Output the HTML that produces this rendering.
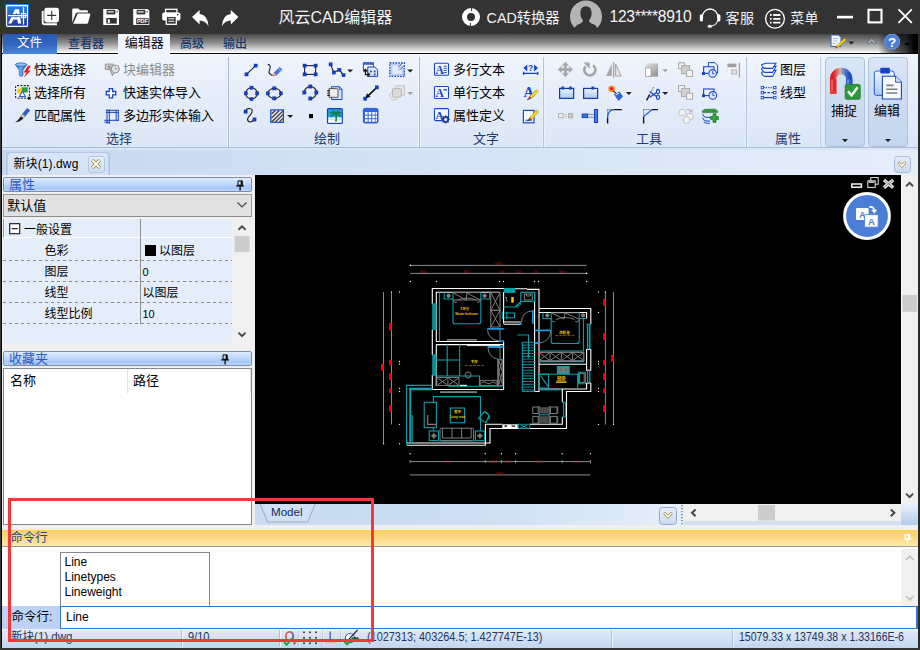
<!DOCTYPE html>
<html><head><meta charset="utf-8">
<style>
*{box-sizing:border-box;margin:0;padding:0}
html,body{width:920px;height:650px;overflow:hidden;background:#333}
body{font-family:"Liberation Sans","Noto Sans CJK SC",sans-serif;font-size:13px;color:#000;position:relative}
.abs{position:absolute}
#title{left:0;top:0;width:920px;height:34px;background:#333;color:#fff}
#title .t{position:absolute;top:6px;font-size:15px;line-height:20px;white-space:nowrap;color:#f4f4f4}
#tabs{left:2px;top:34px;width:916px;height:20px;background:linear-gradient(#484848 0%,#929292 48%,#e6e6e6 90%,#fff 94%);border-bottom:1.5px solid #0a0a0a}
.tab{position:absolute;top:0;height:19px;font-size:13px;line-height:18px;text-align:center;color:#18386c;white-space:nowrap;font-weight:500}
#ribbon{left:2px;top:54px;width:916px;height:94px;background:linear-gradient(#f1f6fd 0%,#e6eefa 35%,#dce7f6 100%);border-bottom:1px solid #a8bcd8}
.rl{position:absolute;font-size:13px;line-height:16px;white-space:nowrap;color:#000}
.gl{position:absolute;top:78px;font-size:13px;line-height:15px;color:#1e3f73;white-space:nowrap;text-align:center}
.sep{position:absolute;top:4px;width:2px;height:88px;background:linear-gradient(90deg,#b7cbe6 50%,#f7faff 50%)}
#docbar{left:2px;top:148px;width:916px;height:27px;background:linear-gradient(90deg,#c6d8ef,#e6eefa)}
#left{left:2px;top:175px;width:253px;height:355px;background:#f0f0f0}
#canvas{left:255px;top:175px;width:646px;height:329px;background:#000;overflow:hidden}
#vsb{left:901px;top:175px;width:17px;height:329px;background:#f0f0f0}
#modelbar{left:255px;top:504px;width:663px;height:21px;background:#c9dcf2}
#cmdhead{left:2px;top:530px;width:916px;height:16.5px;background:linear-gradient(#fbd160,#fbd677 35%,#fde8b0 100%);border-bottom:1.2px solid #9a9a9a;color:#27448e;font-size:12.4px;line-height:16px;padding-left:8.5px}
#cmdarea{left:2px;top:546.5px;width:916px;height:59.5px;background:#fff}
#cmdin{left:2px;top:605.5px;width:916px;height:23px;background:#bcd3f5}
#status{left:2px;top:628.5px;width:916px;height:19px;background:linear-gradient(#f4f8fd 0,#dde8f7 12%,#cfdef2 60%,#c3d5ed 100%)}
.ph{position:absolute;left:1px;width:249px;height:14.5px;border:1px solid #7f8da6;border-radius:2px;background:linear-gradient(#e0ecfe 0%,#c2dafb 40%,#a7c8f9 78%,#bdd7fb 100%);color:#2a5bc4;font-size:13px;line-height:13px;padding-left:5px;white-space:nowrap}
.prow{position:absolute;left:0;width:231px;height:21px;font-size:12px;line-height:20px;white-space:nowrap}
.prow .k{position:absolute;left:41.5px;top:2px}
.prow .v{position:absolute;left:139.5px;top:2px}
.dash{position:absolute;left:0;width:231px;height:1px;background:repeating-linear-gradient(90deg,#8a8a8a 0 3px,transparent 3px 6px)}
.st{position:absolute;top:1.5px;font-size:12px;line-height:15px;color:#1e3464;white-space:nowrap;transform-origin:0 50%}
.sd{position:absolute;top:1px;width:2px;height:17px;background:linear-gradient(90deg,#aebfda 50%,#f2f6fc 50%)}
</style></head><body>
<div id="title" class="abs">
<svg class="abs" style="left:0;top:0" width="920" height="34" viewBox="0 0 920 34">
<defs><linearGradient id="lg1" x1="0" y1="0" x2="0" y2="1"><stop offset="0" stop-color="#1a8cec"/><stop offset="0.5" stop-color="#2460c8"/><stop offset="1" stop-color="#2030a0"/></linearGradient></defs>

<rect x="5.2" y="4" width="23.7" height="23.9" rx="1.2" fill="url(#lg1)"/>
<rect x="6.6" y="5.6" width="20.9" height="20.8" rx="0.8" fill="none" stroke="#fff" stroke-width="1.1"/>
<path d="M8.2 23.6 L15 9.3 H19 L21.1 23.6 H18 L17.4 19.6 H13.4 L11.4 23.6 Z M14.6 17.2 H17.1 L16.6 12.6 Z" fill="#fff" fill-rule="evenodd"/>
<rect x="7.6" y="14.1" width="14" height="0.9" fill="#2468cc"/><rect x="7.6" y="16.2" width="14" height="0.9" fill="#2458bc"/>
<rect x="8" y="15" width="19.4" height="1.2" fill="#fff"/>
<rect x="22.9" y="7.2" width="1.2" height="17.4" fill="#fff"/>
<rect x="21.4" y="13.4" width="4.3" height="4.3" fill="none" stroke="#fff" stroke-width="0.9"/>

<path d="M42.7 11 V22.6 Q42.7 24.3 44.4 24.3 H57" stroke="#fff" stroke-width="1.9" fill="none"/>
<rect x="44.3" y="7.8" width="14.7" height="14.7" rx="2.4" fill="#fff"/>
<path d="M47.2 15.4 H56.2 M51.7 10.8 V20" stroke="#333" stroke-width="1.1"/>

<path d="M72.2 10 Q72.2 8.6 73.6 8.6 H78.3 L80 10.3 H86.6 Q88 10.3 88 11.7 V12.6 H77.4 Q76 12.6 75.5 14 L72.2 22.5 Z" fill="#fff"/>
<path d="M77.8 13.6 H89.6 Q90.6 13.6 90.3 14.6 L88 23 Q87.7 23.8 86.8 23.8 H73.2 Z" fill="#fff"/>

<path d="M103.2 9 H117 L119 10.6 V25 H103.2 Z" fill="#fff"/>
<rect x="106.6" y="9.8" width="8.7" height="4.6" fill="#333"/><rect x="107.6" y="11.3" width="6" height="1.2" fill="#fff"/>
<rect x="116.6" y="10.8" width="1" height="1.8" fill="#333"/>
<rect x="106.3" y="18" width="10.5" height="5.6" fill="#333"/><rect x="107.8" y="19.3" width="2" height="3.6" fill="#fff"/>

<path d="M133.2 9 H147.3 L149.3 10.6 V25 H133.2 Z" fill="#fff"/>
<rect x="136.6" y="9.8" width="8.7" height="4.6" fill="#333"/><rect x="137.6" y="11.3" width="6" height="1.2" fill="#fff"/>
<rect x="146.6" y="10.8" width="1" height="1.8" fill="#333"/>
<rect x="136.2" y="18.2" width="12.4" height="6" fill="#333"/>
<text x="136.9" y="23.4" font-family="Liberation Sans,sans-serif" font-size="5.6" font-weight="bold" fill="#fff" textLength="11" lengthAdjust="spacingAndGlyphs">PDF</text>

<rect x="165.6" y="9.3" width="11.3" height="4" fill="none" stroke="#fff" stroke-width="1.3"/>
<rect x="162.2" y="12.6" width="18.2" height="7.8" rx="1.6" fill="#fff"/>
<rect x="177" y="14" width="1.4" height="1.4" fill="#333"/>
<rect x="166.3" y="16.3" width="10" height="8" fill="#333" stroke="#fff" stroke-width="1.3"/>
<path d="M168.3 18.8 H174.3 M168.3 21.2 H174.3" stroke="#fff" stroke-width="1.1"/>

<path d="M192 17 L199.6 10 V14 Q207.5 14.3 208.6 26.4 Q205.5 20.6 199.6 20.5 V24.4 Z" fill="#fff"/>

<path d="M238.4 17 L230.8 10 V14 Q222.9 14.3 221.8 26.4 Q224.9 20.6 230.8 20.5 V24.4 Z" fill="#fff"/>

<circle cx="471" cy="17" r="6.5" fill="none" stroke="#fff" stroke-width="5"/>
<path d="M471.6 7.5 V11 M470.4 23 V26.5" stroke="#333" stroke-width="1"/>

<circle cx="586" cy="16.6" r="16" fill="#b4b4b4"/>
<path d="M586 6.2 C590.5 6.2 591.8 10 591.6 13.5 C591.4 17 590.3 19 589 20.3 C589 22 590 23 592 23.8 C596 25 598 27 599 34 H573 C574 27 576 25 580 23.8 C582 23 583 22 583 20.3 C581.7 19 580.6 17 580.4 13.5 C580.2 10 581.5 6.2 586 6.2 Z" fill="#333"/>

<path d="M702.3 17 A7.8 8 0 0 1 717.9 17" fill="none" stroke="#fff" stroke-width="1.3"/>
<rect x="699.8" y="14.2" width="3.2" height="7.4" rx="1.6" fill="#fff"/>
<rect x="717.2" y="14.2" width="3.2" height="7.4" rx="1.6" fill="#fff"/>
<path d="M717.6 20.5 Q716.5 25.3 711.5 26" fill="none" stroke="#fff" stroke-width="1.1"/>
<ellipse cx="709.8" cy="26.2" rx="2.3" ry="1.5" fill="#fff"/>

<circle cx="775" cy="18.8" r="9.4" fill="none" stroke="#fff" stroke-width="1.3"/>
<path d="M770 15 H771.6 M773.2 15 H780.4 M770 18.8 H771.6 M773.2 18.8 H780.4 M770 22.6 H771.6 M773.2 22.6 H780.4" stroke="#fff" stroke-width="1.8"/>

<rect x="837" y="15.8" width="16" height="2.6" fill="#fff"/>
<rect x="868.5" y="9.8" width="13" height="12.6" fill="none" stroke="#fff" stroke-width="2.1"/>
<path d="M898.5 9.3 L911.8 22.8 M911.8 9.3 L898.5 22.8" stroke="#fff" stroke-width="1.8"/>
</svg>

<div class="t" style="left:278.4px;top:8px;font-size:16px">风云CAD编辑器</div>
<div class="t" style="left:486.6px;top:8.3px;font-size:14.3px">CAD转换器</div>
<div class="t" style="left:609.6px;top:7px;font-size:15.6px;letter-spacing:-0.3px">123****8910</div>
<div class="t" style="left:725.6px;top:8.3px;font-size:14px;letter-spacing:0.3px">客服</div>
<div class="t" style="left:790.2px;top:8.3px;font-size:14px;letter-spacing:0.3px">菜单</div>
</div>
<div id="tabs" class="abs">
<div class="abs" style="left:876px;top:0;width:40px;height:18.5px;background:linear-gradient(90deg,rgba(0,0,0,0),rgba(0,0,0,.5) 30%,rgba(10,10,10,.8) 70%,#000 92%)"></div>
<div class="tab" style="left:0.5px;width:54px;height:20px;background:linear-gradient(#2a59b4,#3565c0 55%,#4a88dc);color:#fff;font-size:12.5px;font-weight:400">文件</div>
<div class="tab" style="left:53px;width:62px;font-size:12px;line-height:20px">查看器</div>
<div class="tab" style="left:116.3px;width:51.7px;background:#f0f5fc;color:#0a0a14;height:20.5px;font-size:13px;line-height:18px;font-weight:400">编辑器</div>
<div class="tab" style="left:168px;width:44px;font-size:12px;line-height:20px">高级</div>
<div class="tab" style="left:212px;width:42px;font-size:12px;line-height:20px">输出</div>
<svg class="abs" style="left:820px;top:0" width="96" height="19" viewBox="822 34 96 19">

<path d="M831 35 H838.5 L841 37.5 V46.5 H831 Z" fill="#eef3fb" stroke="#3a62b0" stroke-width="1"/>
<path d="M833 38.5 H838 M833 41 H837 M833 43.5 H835.5" stroke="#9db4dc" stroke-width="0.8"/>
<path d="M836.2 46.2 L844.5 38.2 L846 39.7 L837.8 47.6 Z" fill="#f5d800" stroke="#b88a00" stroke-width="0.5"/>
<path d="M836.2 46.2 L837.8 47.6 L834.6 48.6 Z" fill="#c03020"/>
<path d="M848.3 41.4 H854.3 L851.3 44.6 Z" fill="#222"/>

<path d="M867.6 43.2 Q867.4 42 868.5 41 L871.7 38.4 L874.9 41 Q876 42 875.8 43.2 Q874.6 44.2 873.6 43.2 L871.7 41.4 L869.8 43.2 Q868.8 44.2 867.6 43.2 Z" fill="#d8dde4" fill-opacity="0.5" stroke="#56657a" stroke-width="0.9"/>

<circle cx="892" cy="41.7" r="8" fill="#4b7fd6"/>
<circle cx="892" cy="41.7" r="7.6" fill="none" stroke="#6f9ae2" stroke-width="0.8"/>
<text x="892" y="46.6" text-anchor="middle" font-family="Liberation Sans,sans-serif" font-weight="bold" font-size="13.5" fill="#fff">?</text>
<path d="M904 43 H910.2 L907.1 45.8 Z" fill="#000"/>
</svg>

</div>
<div id="ribbon" class="abs">
<svg class="abs" style="left:0;top:0" width="916" height="94" viewBox="2 54 916 94" font-family="'Liberation Sans','Noto Sans CJK SC',sans-serif" font-size="13">
<defs>
<linearGradient id="gb" x1="0" y1="0" x2="0" y2="1"><stop offset="0" stop-color="#eef4fd"/><stop offset="1" stop-color="#a9c8f5"/></linearGradient>
<linearGradient id="gbtn" x1="0" y1="0" x2="0" y2="1"><stop offset="0" stop-color="#dbe7f7"/><stop offset="0.4" stop-color="#cddcf1"/><stop offset="1" stop-color="#c4d6ee"/></linearGradient>
<linearGradient id="gfun" x1="0" y1="0" x2="1" y2="0"><stop offset="0" stop-color="#1d62cc"/><stop offset="0.45" stop-color="#6aacf2"/><stop offset="1" stop-color="#1a4eb4"/></linearGradient>
<linearGradient id="ggray" x1="0" y1="0" x2="1" y2="1"><stop offset="0" stop-color="#e6e6e6"/><stop offset="1" stop-color="#8e8e8e"/></linearGradient>
<linearGradient id="gmag" x1="0" y1="0" x2="1" y2="0"><stop offset="0" stop-color="#e02020"/><stop offset="0.45" stop-color="#d8b0a0"/><stop offset="0.6" stop-color="#7090d0"/><stop offset="1" stop-color="#2050c0"/></linearGradient>
<g id="h"><rect x="-1.6" y="-1.6" width="3.2" height="3.2" fill="#1040d0" stroke="#0a2a90" stroke-width="0.4"/></g>
<g id="dd"><path d="M0 0 H6 L3 3 Z" fill="#222"/></g>
<g id="ddg"><path d="M0 0 H6 L3 3 Z" fill="#a0a0a0"/></g>
</defs>

<g>
<rect x="227.2" y="57" width="0.8" height="90" fill="#f6f9fe"/><rect x="228" y="57" width="1" height="90" fill="#a3b8d6"/><rect x="229" y="57" width="1" height="90" fill="#eef4fc"/>
<rect x="418.2" y="57" width="0.8" height="90" fill="#f6f9fe"/><rect x="419" y="57" width="1" height="90" fill="#a3b8d6"/><rect x="420" y="57" width="1" height="90" fill="#eef4fc"/>
<rect x="542.4" y="57" width="0.8" height="90" fill="#f6f9fe"/><rect x="543.2" y="57" width="1" height="90" fill="#a3b8d6"/><rect x="544.2" y="57" width="1" height="90" fill="#eef4fc"/>
<rect x="745.4" y="57" width="0.8" height="90" fill="#f6f9fe"/><rect x="746.2" y="57" width="1" height="90" fill="#a3b8d6"/><rect x="747.2" y="57" width="1" height="90" fill="#eef4fc"/>
<rect x="819.6" y="57" width="0.8" height="90" fill="#f6f9fe"/><rect x="820.4" y="57" width="1" height="90" fill="#a3b8d6"/><rect x="821.4" y="57" width="1" height="90" fill="#eef4fc"/>
</g>

<g fill="#1e3c70" text-anchor="middle">
<text x="119" y="143">选择</text>
<text x="327" y="143">绘制</text>
<text x="486" y="143">文字</text>
<text x="649" y="143">工具</text>
<text x="788" y="143">属性</text>
</g>

<g fill="#000">
<text x="34" y="74">快速选择</text>
<text x="34" y="97">选择所有</text>
<text x="34" y="120">匹配属性</text>
<text x="123" y="74" fill="#8c8c8c">块编辑器</text>
<text x="123" y="97">快速实体导入</text>
<text x="123" y="120">多边形实体输入</text>
<text x="453" y="74">多行文本</text>
<text x="453" y="97">单行文本</text>
<text x="453" y="120">属性定义</text>
<text x="780" y="74">图层</text>
<text x="780" y="97">线型</text>
</g>

<path d="M15.3 64.5 Q21 61.5 27 64.5 L23 70 V75.5 Q21 77.3 19.3 75.5 V70 Z" fill="url(#gfun)" stroke="#1c56b0" stroke-width="0.6"/>
<ellipse cx="21.1" cy="64.6" rx="5.6" ry="1.7" fill="#8cc0f6" stroke="#1c56b0" stroke-width="0.6"/>
<path d="M28 65.8 L23.6 72.4 H26.4 L23.8 77.8 L30.8 70.4 H27.8 L30.8 65.8 Z" fill="#e81c1c"/>

<rect x="15.6" y="85.6" width="13.8" height="12.6" rx="1.5" fill="#f8fbff" stroke="#222" stroke-width="1.1" stroke-dasharray="2 1.3"/>
<rect x="21.6" y="87.3" width="6.2" height="5.2" fill="#28a038"/>
<circle cx="19.6" cy="91" r="2.7" fill="#f5c820"/>
<path d="M19.4 96.6 L22.4 91.2 L25.4 96.6 Z" fill="#fff" stroke="#2060d0" stroke-width="1.1"/>
<path d="M27.3 96.7 H30.6 V100 L29.6 99 L28.6 100 L27.3 98.7 L28.3 97.7 Z" fill="#111"/>

<path d="M22.6 114 L27.2 108.4 L29.8 110.3 L25.2 116 Z" fill="#2a5fd0" stroke="#17388a" stroke-width="0.5"/>
<path d="M22.6 114 L25.2 116 L23.4 118.3 L20.7 116.4 Z" fill="#c8c8c8" stroke="#555" stroke-width="0.4"/>
<path d="M20.7 116.4 L23.4 118.3 Q20 122 15.2 122.4 Q18.7 119.5 20.7 116.4 Z" fill="#222"/>

<path d="M105.3 64 H113 V69.5 H105.3 Z" fill="#c4c4c4" stroke="#8a8a8a" stroke-width="0.8"/>
<path d="M108.5 66 L112.5 75.6 L114.3 72.5 L117 72 Z" fill="#d8d8d8" stroke="#777" stroke-width="0.8"/>
<circle cx="115.3" cy="69" r="4" fill="#e4e4e4" stroke="#8c8c8c" stroke-width="1"/>
<path d="M115.3 66.8 V69.2 H117.4" stroke="#888" stroke-width="0.8" fill="none"/>

<path d="M109.3 88.6 H112.6 V91.5 H115.7 V94.8 H112.6 V97.8 H109.3 V94.8 H106.2 V91.5 H109.3 Z" fill="#fff" stroke="#1848c8" stroke-width="1.3"/>

<path d="M107 109.5 V124 M109.3 109.5 V124 M104.3 120.3 H119 M106 110.3 H118.6 M106 112.4 H118.6 M118.3 110.3 V121 M116.2 110.3 V121 M104.3 122.2 H109.3" stroke="#1545c0" stroke-width="1" fill="none"/>


<g stroke="#222" stroke-width="1.1" fill="none">
<path d="M246.5 74.4 L255.6 65.6"/>
<path d="M267.8 64.4 Q271 65 270 68.5 Q268 72.5 270 74 Q271.5 75.3 272.6 75.4"/>
<rect x="304.6" y="65.6" width="11" height="8.8"/>
<path d="M330.6 64.4 L333.8 72.5 L339.4 69.8 L343.5 75.2"/>
<circle cx="251.5" cy="93.4" r="5.7"/>
<ellipse cx="274.4" cy="93.4" rx="6.5" ry="5"/>
<path d="M304.4 92.5 A6 6 0 1 1 310.4 98.5"/>
<path d="M245.6 111.5 Q246 108.3 249.5 108.5 Q253 109 252 112.3 Q250.8 115 248.5 117 Q246.5 119.5 248.5 121.5 Q251 123 254.5 119.5"/>
</g>
<use href="#h" x="246.5" y="74.4"/><use href="#h" x="255.6" y="65.6"/>
<use href="#h" x="304.6" y="65.6"/><use href="#h" x="315.6" y="65.6"/><use href="#h" x="304.6" y="74.4"/><use href="#h" x="315.6" y="74.4"/>
<use href="#h" x="330.6" y="64.4"/><use href="#h" x="333.8" y="72.5"/><use href="#h" x="339.4" y="69.8"/><use href="#h" x="343.5" y="75.2"/>
<use href="#h" x="251.5" y="87.7"/><use href="#h" x="251.5" y="99.1"/><use href="#h" x="245.8" y="93.4"/><use href="#h" x="257.2" y="93.4"/>
<use href="#h" x="274.4" y="88.4"/><use href="#h" x="274.4" y="98.4"/><use href="#h" x="267.9" y="93.4"/><use href="#h" x="280.9" y="93.4"/>
<use href="#h" x="310.4" y="86.5"/><use href="#h" x="304.4" y="92.5"/><use href="#h" x="316.4" y="92.5"/><use href="#h" x="310.4" y="98.5"/>
<use href="#h" x="245.6" y="111.6"/><use href="#h" x="254.5" y="119.5"/>
<use href="#dd" x="347.2" y="69.4"/>

<path d="M274.2 72.8 L279.6 67.3 L282 69.6 L276.6 75.1 Z" fill="#3b7be8" stroke="#1a4ab0" stroke-width="0.5"/>
<path d="M274.2 72.8 L276.6 75.1 L273 76 Z" fill="#f0d0b0" stroke="#c03030" stroke-width="0.5"/>
<path d="M278.4 68.5 L280.8 70.8" stroke="#bcd6fa" stroke-width="0.8"/>

<path d="M331.5 86.7 H339.3 L342 89.4 V99.5 H331.5 Z" fill="#d5e5fb" stroke="#1848c8" stroke-width="1"/>
<path d="M339.3 86.7 V89.4 H342" fill="none" stroke="#1848c8" stroke-width="0.8"/>
<path d="M329 88.6 H336.6 Q338 88.6 338 90 V97.3 H329 Z" fill="#ededed" stroke="#444" stroke-width="0.9"/>
<path d="M327.2 90.6 H330 M327.2 93 H330 M327.2 95.4 H330" stroke="#222" stroke-width="1.1"/>

<rect x="270.8" y="109.9" width="12.6" height="12.4" fill="#e6e6e6" stroke="#1545c0" stroke-width="1.2"/>
<path d="M271.5 114 L275.3 110.5 M271.5 118 L279.3 110.5 M271.8 121.7 L283 111 M275.5 121.7 L283 114.6 M279.5 121.7 L283 118.4" stroke="#3c3c3c" stroke-width="1.2"/>
<use href="#dd" x="287.2" y="115"/>

<rect x="309" y="114" width="4" height="4.2" fill="#000"/>

<rect x="327.5" y="108.6" width="14.8" height="14.8" rx="1" fill="#2aa0e8" stroke="#1545c0" stroke-width="1.2"/>
<rect x="328.2" y="117.3" width="13.4" height="2.2" fill="#e8f6ff"/>
<rect x="328.2" y="119.5" width="13.4" height="3.3" fill="#fff"/>
<path d="M335.3 113 Q336 118 335 121.6 H336.8 Q337.2 117 336.3 113 Z" fill="#0e6a30"/>
<path d="M335.8 113.2 Q332 110 329.6 113.3 Q333 112.4 335.8 113.8 Q331.5 113.5 330.6 117 Q333.3 114.3 335.8 114 Q338.5 114.2 340.6 117 Q340.2 113.4 336.2 113.6 Q339 112.3 341.6 113.4 Q339.4 110 335.8 113.2 Z" fill="#0e7a34" stroke="#0e7a34" stroke-width="0.5"/>
<path d="M335.8 113.4 Q335 110.5 332.8 110.2 M335.8 113.4 Q337 110.6 339 110.3" stroke="#0e7a34" stroke-width="1" fill="none"/>

<rect x="363.4" y="62.8" width="10" height="7.6" fill="#f4f8ff" stroke="#1848c8" stroke-width="1"/>
<rect x="363.4" y="62.8" width="10" height="2" fill="#2a66e0"/>
<rect x="370.3" y="63.1" width="1.6" height="1.4" fill="#e82020"/>
<path d="M367.8 67 H374.8 L377.6 69.8 V76.4 H367.8 Z" fill="#dce9fb" stroke="#1848c8" stroke-width="1"/>
<rect x="370" y="70.6" width="1.8" height="1.8" fill="#1848c8"/><rect x="373.8" y="70.6" width="1.8" height="1.8" fill="#1848c8"/><rect x="373.8" y="73.6" width="1.8" height="1.8" fill="#1848c8"/>
<path d="M365.4 69.6 V74.6 H368.6 M363.6 71.6 L365.4 69.2 L367.2 71.6 M367.4 72.8 L369.6 74.6 L367.4 76.4" stroke="#111" stroke-width="1.2" fill="none"/>

<path d="M390 63.6 H399.5 L404 68 V76 H390 Z" fill="#1848c8" opacity="0.18"/>
<rect x="389.8" y="63" width="14.6" height="13.4" fill="none" stroke="#1545c0" stroke-width="1.3" stroke-dasharray="1.6 1.2"/>
<path d="M392 65 H398.5 V70 H402.6 V74.4 H392 Z" fill="#e6eefc" stroke="#9cb8ee" stroke-width="0.6"/>
<path d="M399 66.6 L402.6 63 M401 68.8 L404.4 65.4" stroke="#1545c0" stroke-width="0.9"/>
<use href="#dd" x="407.2" y="69.4"/>

<path d="M376.6 87.6 L367.2 96.6" stroke="#111" stroke-width="1.6"/>
<path d="M365 98.8 L367 93.2 L370.6 96.8 Z" fill="#111"/>
<use href="#h" x="376.8" y="87.4"/><use href="#h" x="365.2" y="98.6"/>

<circle cx="394.2" cy="95.6" r="4.4" fill="#eaeaea" stroke="#c0c0c0" stroke-width="0.9"/>
<rect x="396" y="85.6" width="8.6" height="9.6" fill="#e3e3e3" stroke="#c4c4c4" stroke-width="0.9"/>
<rect x="392.5" y="88.6" width="8.8" height="8.6" rx="1" fill="#dadada" stroke="#b4b4b4" stroke-width="0.9"/>
<use href="#ddg" x="407.2" y="92"/>

<rect x="363.4" y="108.4" width="14.6" height="14.6" rx="1.6" fill="#2a6ae8" stroke="#1545c0" stroke-width="0.8"/>
<g fill="#fff">
<rect x="365" y="112" width="2.6" height="2.6"/><rect x="368.6" y="112" width="2.6" height="2.6"/><rect x="372.2" y="112" width="2.6" height="2.6"/><rect x="375.6" y="112" width="1.4" height="2.6"/>
<rect x="365" y="115.6" width="2.6" height="2.6"/><rect x="368.6" y="115.6" width="2.6" height="2.6"/><rect x="372.2" y="115.6" width="2.6" height="2.6"/><rect x="375.6" y="115.6" width="1.4" height="2.6"/>
<rect x="365" y="119.2" width="2.6" height="2.6"/><rect x="368.6" y="119.2" width="2.6" height="2.6"/><rect x="372.2" y="119.2" width="2.6" height="2.6"/><rect x="375.6" y="119.2" width="1.4" height="2.6"/>
</g>


<g>
<rect x="434.5" y="63.3" width="14" height="12" rx="1" fill="#f2f7ff" stroke="#1848c8" stroke-width="1.1"/>
<text x="435.6" y="73.6" font-family="'Liberation Serif',serif" font-weight="bold" font-size="11.5" fill="#1545c0">A</text>
<path d="M443.6 66.2 H446.8 M443.6 68.3 H446.8 M443.6 70.4 H446.8 M443.6 72.5 H446.8" stroke="#1848c8" stroke-width="0.9"/>
<rect x="434.5" y="86.5" width="14" height="12" rx="1" fill="#f2f7ff" stroke="#1848c8" stroke-width="1.1"/>
<text x="435.6" y="96.8" font-family="'Liberation Serif',serif" font-weight="bold" font-size="11.5" fill="#1545c0">A</text>
<path d="M443.4 89.8 H447" stroke="#1848c8" stroke-width="1.3"/>
<rect x="434.5" y="108.6" width="14" height="12" rx="1" fill="#f2f7ff" stroke="#1848c8" stroke-width="1.1"/>
<text x="435.6" y="118.6" font-family="'Liberation Serif',serif" font-weight="bold" font-size="11" fill="#1545c0">A</text>
<circle cx="445.6" cy="119.4" r="2.6" fill="#fff" stroke="#1a3a90" stroke-width="1.5"/>
<path d="M445.6 115.2 V123.6 M441.4 119.4 H449.8 M442.6 116.4 L448.6 122.4 M448.6 116.4 L442.6 122.4" stroke="#1a3a90" stroke-width="1.1"/>
<circle cx="445.6" cy="119.4" r="1.5" fill="#fff"/>
</g>

<path d="M523.4 68 L527.3 64.6 V71.4 Z M538 68 L534.1 64.6 V71.4 Z" fill="#1545c0"/>
<text x="530.7" y="71.4" text-anchor="middle" font-weight="bold" font-size="8.5" fill="#1545c0">?</text>
<path d="M523.6 73.4 H537.8 M523.6 71.8 V75 M537.8 71.8 V75" stroke="#1545c0" stroke-width="1.3"/>

<text x="523.4" y="96.5" font-family="'Liberation Serif',serif" font-weight="bold" font-size="14.5" fill="#1545c0">A</text>
<path d="M529.6 96.3 L536.4 89.6 L538.4 91.6 L531.6 98.3 Z" fill="#f8d820" stroke="#a07800" stroke-width="0.5"/>
<path d="M529.6 96.3 L531.6 98.3 L529.8 99.2 L528.4 97.9 Z" fill="#c03020"/>
<path d="M528.4 97.9 L529.8 99.2 L526.6 100.2 Z" fill="#223a80"/>

<rect x="523.4" y="110.4" width="10.6" height="12.4" fill="#f4f8ff" stroke="#1848c8" stroke-width="1.2"/>
<path d="M525.4 120.2 H532" stroke="#1848c8" stroke-width="1"/>
<path d="M529.8 117.6 L536.6 110 L538.6 111.8 L531.8 119.5 Z" fill="#f8d820" stroke="#a07800" stroke-width="0.5"/>
<path d="M529.8 117.6 L531.8 119.5 L530 120.4 L528.6 119 Z" fill="#c03020"/>
<path d="M528.6 119 L530 120.4 L526.8 121.4 Z" fill="#223a80"/>


<g fill="#a8a8a8" stroke="#989898" stroke-width="0.4">
<path d="M565.4 62 L568.4 65.4 H566.4 V68.4 H569.4 V66.4 L572.8 69.4 L569.4 72.4 V70.4 H566.4 V73.4 H568.4 L565.4 76.8 L562.4 73.4 H564.4 V70.4 H561.4 V72.4 L558 69.4 L561.4 66.4 V68.4 H564.4 V65.4 H562.4 Z"/>
</g>

<path d="M585.4 66.4 A5.6 5.6 0 1 0 593 65.2" fill="none" stroke="#a6a6a6" stroke-width="2.6"/>
<path d="M583.4 62.6 H589.6 V68.8 Z" fill="#a6a6a6"/>

<path d="M611.8 64 V76 H606.2 Z" fill="#a4a4a4"/>
<path d="M615.6 64 V76 H621.2 Z" fill="#e6e6e6" stroke="#a4a4a4" stroke-width="1"/>
<path d="M613.7 62.2 V77.8" stroke="#8e8e8e" stroke-width="1"/>

<rect x="559.6" y="88.4" width="14" height="10" fill="url(#gb)" stroke="#1038b0" stroke-width="1.2"/>
<rect x="561.4" y="86.6" width="2.8" height="3" fill="#1545c0"/><rect x="569" y="86.6" width="2.8" height="3" fill="#1545c0"/>
<rect x="583.6" y="88.4" width="14" height="10" fill="url(#gb)" stroke="#1038b0" stroke-width="1.2"/>
<rect x="591.4" y="86.6" width="2.8" height="3" fill="#1545c0"/>

<circle cx="611.6" cy="88.8" r="3.4" fill="#f8a020"/>
<circle cx="611.6" cy="88.8" r="1.8" fill="#e82020"/>
<path d="M613 90.6 Q614.6 92 616 93.4" stroke="#222" stroke-width="1.2" fill="none"/>
<path d="M614.4 94.6 L619.4 92 L622.6 96.6 L618.6 100.4 Z" fill="#2a6ae0" stroke="#1038a0" stroke-width="0.6"/>
<path d="M615.6 94.8 L619 93.2" stroke="#fff" stroke-width="0.9"/>
<use href="#dd" x="625.8" y="92"/>

<rect x="558.6" y="113.6" width="4.4" height="4.2" fill="#f0f0f0" stroke="#aaa" stroke-width="0.9"/>
<rect x="568.4" y="113.6" width="4.4" height="4.2" fill="#c8c8c8" stroke="#aaa" stroke-width="0.9"/>
<path d="M564.4 114.6 H567 M564.4 116.8 H567" stroke="#aaa" stroke-width="0.9" stroke-dasharray="1 0.8"/>

<rect x="582.2" y="114" width="5.4" height="3.6" fill="#3a7af0" stroke="#1038b0" stroke-width="0.9"/>
<path d="M588.6 114.4 H593.4 M588.6 117.2 H593.4" stroke="#222" stroke-width="1" stroke-dasharray="1 1"/>
<rect x="594.4" y="109.4" width="3.2" height="13.2" fill="#3a7af0" stroke="#1038b0" stroke-width="0.9"/>

<path d="M607.6 123.4 V118 M613.6 109.6 H621.8" stroke="#111" stroke-width="1.4"/>
<path d="M607.6 118 Q607.8 110.4 613.6 109.7" stroke="#2a66e0" stroke-width="1.3" fill="none"/>
<path d="M607.6 109.6 V117 M607.6 109.6 H613" stroke="#333" stroke-width="0.9" stroke-dasharray="1 1" fill="none"/>

<path d="M643.6 123.6 V116.6 M652 109.6 H658" stroke="#111" stroke-width="1.4"/>
<path d="M643.6 116.6 L652 109.7" stroke="#2a66e0" stroke-width="1.3"/>
<path d="M643.6 109.6 V116 M643.6 109.6 H651" stroke="#333" stroke-width="0.9" stroke-dasharray="1 1" fill="none"/>

<rect x="645.4" y="63.4" width="12.6" height="13.2" fill="url(#ggray)"/>
<rect x="645.6" y="68" width="5.4" height="8.4" fill="#fff" stroke="#666" stroke-width="0.9" stroke-dasharray="1 1"/>
<use href="#ddg" x="662.2" y="69.2"/>

<path d="M646.6 100 L654 86.4" stroke="#555" stroke-width="1" stroke-dasharray="1.6 1"/>
<path d="M646.6 100.4 L649.6 94.6" stroke="#222" stroke-width="1.4"/>
<path d="M649.6 91.4 L656.4 96.4 M649.6 97.4 L656.4 92.4" stroke="#1545c0" stroke-width="1.2"/>
<ellipse cx="658" cy="91.6" rx="1.5" ry="2.2" fill="none" stroke="#1545c0" stroke-width="1.1"/>
<ellipse cx="658" cy="97.2" rx="1.5" ry="2.2" fill="none" stroke="#1545c0" stroke-width="1.1"/>
<use href="#dd" x="662.2" y="92"/>

<g stroke="#a8a8a8" stroke-width="1">
<rect x="678.6" y="62.8" width="6" height="6" fill="#f0f0f0"/>
<rect x="681.6" y="65.8" width="8" height="8" fill="#d0d0d0"/>
<rect x="686.6" y="70.4" width="6" height="6" fill="#f4f4f4"/>
<rect x="678.6" y="85.6" width="6" height="6" fill="#f4f4f4"/>
<rect x="681.6" y="88.6" width="8" height="8" fill="#d4d4d4"/>
<rect x="686.6" y="93.2" width="6" height="6" fill="#f4f4f4"/>
</g>

<g stroke="#bcbcbc" stroke-width="0.9" fill="#f2f2f2">
<circle cx="682.2" cy="112.4" r="3.4"/>
<circle cx="690" cy="116.6" r="3.4"/>
<circle cx="686.6" cy="120" r="3.4"/>
</g>
<path d="M686.6 109.6 Q690 109 691.6 111.6 M689.6 111.8 H692 V109.2" stroke="#b0b0b0" stroke-width="1" fill="none"/>

<path d="M708.4 62.6 H715 L717.6 65.4 V73 H708.4 Z" fill="#e8f0fd" stroke="#1848c8" stroke-width="1"/>
<rect x="703.6" y="66.8" width="10.4" height="6.6" fill="#e8f0fd" stroke="#1848c8" stroke-width="1.1"/>
<rect x="702" y="72" width="3" height="3" fill="#1545c0"/>
<circle cx="712.6" cy="73.4" r="3.8" fill="#dce8fc" stroke="#1848c8" stroke-width="1.1"/>
<path d="M712.6 71.2 V73.6 H714.4" stroke="#1848c8" stroke-width="0.9" fill="none"/>
<rect x="703.6" y="89" width="10.4" height="6.6" fill="#e8f0fd" stroke="#1848c8" stroke-width="1.1"/>
<rect x="702" y="94.2" width="3" height="3" fill="#1545c0"/>
<circle cx="712.8" cy="95.4" r="3.8" fill="#dce8fc" stroke="#1848c8" stroke-width="1.1"/>
<path d="M712.8 93.2 V95.6 H714.6" stroke="#1848c8" stroke-width="0.9" fill="none"/>

<path d="M702.4 111 L705 109.2 H715.4 L717.6 111 V112.6 H702.4 Z" fill="#2e9a3a" stroke="#1a6a24" stroke-width="0.6"/>
<path d="M702.6 114 Q703.4 117 706 117.4 H711 M702.6 117.6 Q703.4 120.6 706 121 H710 M703.6 121.6 Q704.8 123.2 707 123.2 H710" stroke="#1848c8" stroke-width="1" fill="none"/>
<path d="M713 113.8 H716 V116.6 H718.4 V119.6 H716 V122.4 H713 V119.6 H710.6 V116.6 H713 Z" fill="#28a838" stroke="#14701e" stroke-width="0.7"/>

<rect x="727.4" y="63.6" width="9" height="3.6" fill="#a0a0a0"/>
<rect x="731.4" y="70" width="5" height="4" fill="#e4e4e4" stroke="#a8a8a8" stroke-width="0.8"/>
<path d="M739.4 62.8 V77.6" stroke="#a0a0a0" stroke-width="1.2"/>


<g fill="#f2f7ff" stroke="#1848c8" stroke-width="1.1">
<path d="M761.6 72.4 L765.6 70.4 H776 L772.6 76.4 H765 Q762 76 761.6 72.4 Z"/>
<path d="M761.6 68.4 L765.6 66.4 H776 L772.6 72.4 H765 Q762 72 761.6 68.4 Z"/>
<path d="M761.6 64.8 L765.6 63.2 H776 L772.6 68.4 H765 Q762 68 761.6 64.8 Z"/>
</g>

<g stroke="#1848c8" fill="#fff">
<path d="M763.4 87.6 H774" stroke-width="1.1" stroke-dasharray="1.2 1.2"/>
<path d="M763.4 92.6 H774" stroke-width="1.1" stroke-dasharray="2.6 1.4"/>
<path d="M763.4 97.6 H774" stroke-width="1.2"/>
<rect x="761.2" y="86.4" width="2.4" height="2.4" stroke-width="0.9"/><rect x="773.6" y="86.4" width="2.4" height="2.4" stroke-width="0.9"/>
<rect x="761.2" y="91.4" width="2.4" height="2.4" stroke-width="0.9"/><rect x="773.6" y="91.4" width="2.4" height="2.4" stroke-width="0.9"/>
<rect x="761.2" y="96.4" width="2.4" height="2.4" stroke-width="0.9"/><rect x="773.6" y="96.4" width="2.4" height="2.4" stroke-width="0.9"/>
</g>

<rect x="825.5" y="57.5" width="39" height="89" rx="3.5" fill="url(#gbtn)" stroke="#aec3e2" stroke-width="1"/>
<rect x="868.5" y="57.5" width="39" height="89" rx="3.5" fill="url(#gbtn)" stroke="#aec3e2" stroke-width="1"/>
<g fill="#000"><text x="844" y="115.3" text-anchor="middle">捕捉</text><text x="887" y="115.3" text-anchor="middle">编辑</text></g>
<path d="M842 139 H848 L845 142.2 Z M885 139 H891 L888 142.2 Z" fill="#222"/>

<path d="M833.2 93.6 V79 A8 8 0 0 1 849.2 79 V93.6" fill="none" stroke="url(#gmag)" stroke-width="6.4"/>
<path d="M833.2 93.6 V79.4" stroke="#e02828" stroke-width="6.4" fill="none"/>
<path d="M849.2 93.6 V79.4" stroke="#2858c8" stroke-width="6.4" fill="none"/>
<path d="M832 93 V79.4" stroke="#f07070" stroke-width="1.4"/>
<path d="M848 88 V79.4" stroke="#80a8f0" stroke-width="1.4"/>
<rect x="830" y="91.2" width="6.4" height="2.6" fill="#e84040"/>
<rect x="845.2" y="84.4" width="15" height="14.8" rx="1.5" fill="#2c9a3a" stroke="#1c7428" stroke-width="0.8"/>
<path d="M848 91.4 L851.6 95.4 L857.6 87.2" stroke="#fff" stroke-width="2.4" fill="none"/>

<rect x="874.3" y="71" width="20" height="24.4" rx="2.4" fill="url(#gb)" stroke="#2a5cc8" stroke-width="1"/>
<rect x="880.3" y="67.8" width="9.6" height="5.6" rx="0.8" fill="#1545c0"/>
<path d="M882.4 76.2 H895.6 L901.4 82.2 V99 H882.4 Z" fill="#f6f9ff" stroke="#1c48b4" stroke-width="1.1"/>
<path d="M895.6 76.2 V82.2 H901.4" fill="#dbe6f8" stroke="#1c48b4" stroke-width="0.9"/>
<path d="M886.2 85.4 H893.4 M886.2 89.2 H897.4 M886.2 93 H897.4" stroke="#7e7e7e" stroke-width="1.6"/>

</svg>

</div>
<div id="docbar" class="abs">
<div class="abs" style="left:0;top:0;width:916px;height:2px;background:#dbe6f5"></div>
<div class="abs" style="left:4px;top:4px;width:104px;height:23px;border:1px solid #b3c6e1;border-bottom:none;border-radius:4px 4px 0 0;background:#bccfe9"></div>
<div class="abs" style="left:5.5px;top:5px;width:100px;height:22px;border-radius:3px 3px 0 0;background:linear-gradient(#dae6f7,#d3e1f5);font-size:12px;line-height:22px;padding-left:6px;white-space:nowrap;letter-spacing:0.1px">新块(1).dwg</div>
<div class="abs" style="left:85.5px;top:7.5px;width:17px;height:17px;border:1px solid #b4c6e0;border-radius:3px;background:linear-gradient(#e6eefa,#cfdef3)"></div>
<svg class="abs" style="left:89px;top:11px" width="10" height="10" viewBox="0 0 10 10"><path d="M1.2 1.2 L8.8 8.8 M8.8 1.2 L1.2 8.8" stroke="#9a8440" stroke-width="3.5"/><path d="M1.4 1.4 L8.6 8.6 M8.6 1.4 L1.4 8.6" stroke="#fff" stroke-width="1.9"/></svg>
<div class="abs" style="left:0;top:26.5px;width:253px;height:1px;background:#f4f4f4"></div>
<div class="abs" style="left:891.5px;top:7.5px;width:17.5px;height:17.5px;border:1px solid #a8bddc;border-radius:3.5px;background:linear-gradient(#e4edf9,#c9daf1)"></div>
<svg class="abs" style="left:895.3px;top:13px" width="10" height="8" viewBox="0 0 11 9"><path d="M1 2.4 L2.6 0.9 L5.5 3.6 L8.4 0.9 L10 2.4 L5.5 7.4 Z" fill="#fff" stroke="#a08838" stroke-width="1"/></svg>

</div>
<div id="left" class="abs">
<div class="ph" style="top:2.3px">属性</div>
<svg class="abs" style="left:233px;top:4.5px" width="10" height="11" viewBox="0 0 10 11"><path d="M3 0.9 H7.2 V5.2 H3 Z" fill="#cfe0fb" stroke="#000" stroke-width="1"/><rect x="5.7" y="0.9" width="1.6" height="4.4" fill="#000"/><path d="M1.2 5.8 H8.9 M5.1 6 V10.4" fill="none" stroke="#000" stroke-width="1.25"/></svg>

<div class="abs" style="left:1px;top:18.5px;width:249px;height:23px;background:#e1e1e1;border:1px solid #9a9a9a;border-bottom:1.5px solid #8c8c8c;font-size:13px;line-height:22px;padding-left:3.3px">默认值</div>
<svg class="abs" style="left:234px;top:26px" width="12" height="8" viewBox="0 0 12 8"><path d="M1.5 1.5 L6 6 L10.5 1.5" fill="none" stroke="#444" stroke-width="1.2"/></svg>

<div class="abs" style="left:1px;top:44px;width:229.3px;height:124px;background:#e4eefb;overflow:hidden">
<div class="abs" style="left:0;top:0;width:231px;height:19px;border-bottom:1px solid #fff;border-left:1px solid #9a9a9a"></div>
<svg class="abs" style="left:5.5px;top:3.5px" width="12" height="12" viewBox="0 0 12 12"><rect x="0.7" y="0.7" width="10" height="10" fill="#fff" stroke="#111" stroke-width="1.1"/><path d="M2.6 5.7 H8.8" stroke="#111" stroke-width="1.1"/></svg>
<div class="abs" style="left:21px;top:1px;font-size:12px;line-height:20px;white-space:nowrap">一般设置</div>
<div class="prow" style="top:20px"><span class="k">色彩</span><span class="v" style="left:156px">以图层</span><i class="abs" style="left:142px;top:5.5px;width:11px;height:11px;background:#000"></i></div>
<div class="dash" style="top:41px"></div>
<div class="prow" style="top:41px"><span class="k">图层</span><span class="v" style="font-size:11px">0</span></div>
<div class="dash" style="top:62px"></div>
<div class="prow" style="top:62px"><span class="k">线型</span><span class="v">以图层</span></div>
<div class="dash" style="top:83px"></div>
<div class="prow" style="top:83px"><span class="k">线型比例</span><span class="v" style="font-size:11px">10</span></div>
<div class="dash" style="top:104px"></div>
<div class="abs" style="left:136.5px;top:0;width:1px;height:105px;background:#8f8f8f"></div>
</div>

<div class="abs" style="left:231.5px;top:44px;width:16.5px;height:124px;background:#f0f0f0">
<svg class="abs" style="left:0;top:0" width="17" height="124" viewBox="0 0 17 124"><path d="M4.5 10.8 L8 7.3 L11.5 10.8" fill="none" stroke="#4a4a4a" stroke-width="2"/><rect x="0.6" y="17" width="15" height="16" fill="#cdcdcd"/><path d="M4.5 113.6 L8 117.1 L11.5 113.6" fill="none" stroke="#4a4a4a" stroke-width="2"/></svg>
</div>

<div class="ph" style="top:176.3px">收藏夹</div>
<svg class="abs" style="left:218px;top:178.5px" width="10" height="11" viewBox="0 0 10 11"><path d="M3 0.9 H7.2 V5.2 H3 Z" fill="#cfe0fb" stroke="#000" stroke-width="1"/><rect x="5.7" y="0.9" width="1.6" height="4.4" fill="#000"/><path d="M1.2 5.8 H8.9 M5.1 6 V10.4" fill="none" stroke="#000" stroke-width="1.25"/></svg>
<div class="abs" style="left:1px;top:192.5px;width:249px;height:157px;background:#fff;border:1px solid #828790">
<div class="abs" style="left:6px;top:3px;font-size:13px;line-height:18px">名称</div>
<div class="abs" style="left:129px;top:3px;font-size:13px;line-height:18px">路径</div>
<div class="abs" style="left:123px;top:0;width:1px;height:24px;background:#e0e0e0"></div>
<div class="abs" style="left:245.5px;top:0;width:1px;height:24px;background:#e0e0e0"></div>
</div>

</div>
<div id="canvas" class="abs">
<svg class="abs" style="left:0;top:0" width="646" height="329" viewBox="255 175 646 329" fill="none" font-family="'Liberation Sans','Noto Sans CJK SC',sans-serif">

<g stroke="#8c8c8c" stroke-width="1">
<path d="M410.3 265.4 H586.6 M410.3 273.4 H586.6"/>
<path d="M383.5 292 V443.8 M391.5 292 V424.5"/>
<path d="M605.4 292 V424.5 M613.5 292 V424.5"/>
<path d="M410.1 461.6 H590.5 M410.1 474.9 H590.5"/>
<path d="M410.1 460 V463.2 M485.3 460 V463.2 M501.4 460 V463.2 M515.6 460 V463.2 M562.2 460 V463.2 M590.5 460 V463.2"/>
</g>

<g fill="#e8e8e8">
<circle cx="410.3" cy="265.4" r="0.8"/><circle cx="586.6" cy="273.4" r="0.8"/>
<circle cx="410.3" cy="281.5" r="0.7"/><circle cx="436.5" cy="281.5" r="0.7"/><circle cx="499.5" cy="281.5" r="0.7"/><circle cx="503.5" cy="281.5" r="0.7"/><circle cx="534.5" cy="281.5" r="0.7"/><circle cx="538.5" cy="281.5" r="0.7"/><circle cx="586.6" cy="281.5" r="0.7"/>
<circle cx="391.5" cy="292" r="0.7"/><circle cx="399.5" cy="292" r="0.7"/><circle cx="399.5" cy="361.5" r="0.7"/><circle cx="399.5" cy="364" r="0.7"/><circle cx="399.5" cy="388.5" r="0.7"/><circle cx="399.5" cy="391.5" r="0.7"/><circle cx="399.5" cy="424.4" r="0.7"/><circle cx="383.6" cy="443.8" r="0.7"/><circle cx="399.5" cy="443.8" r="0.7"/>
<circle cx="598.5" cy="292" r="0.7"/><circle cx="605.4" cy="292" r="0.7"/><circle cx="598.5" cy="312.5" r="0.7"/><circle cx="598.5" cy="361.5" r="0.7"/><circle cx="598.5" cy="364" r="0.7"/><circle cx="598.5" cy="388.5" r="0.7"/><circle cx="598.5" cy="391.5" r="0.7"/><circle cx="598.5" cy="424.4" r="0.7"/><circle cx="613.5" cy="424.4" r="0.7"/>
<circle cx="410.1" cy="453.7" r="0.7"/><circle cx="485.3" cy="453.7" r="0.7"/><circle cx="501.4" cy="453.7" r="0.7"/><circle cx="515.6" cy="453.7" r="0.7"/><circle cx="562.2" cy="453.7" r="0.7"/><circle cx="590.5" cy="453.7" r="0.7"/>
</g>

<g fill="#ff0000">
<rect x="389.2" y="323" width="2.6" height="7.3"/><rect x="389.2" y="360" width="2.6" height="5.4"/><rect x="389.2" y="373" width="2.6" height="7"/><rect x="389.2" y="388.5" width="2.6" height="4.5"/><rect x="389.2" y="405" width="2.6" height="6.5"/><rect x="381" y="363.8" width="2.8" height="7"/>
<rect x="603.2" y="299" width="2.6" height="6.7"/><rect x="603.2" y="333" width="2.6" height="7"/><rect x="603.2" y="360" width="2.6" height="5.4"/><rect x="603.2" y="373" width="2.6" height="7"/><rect x="603.2" y="388.5" width="2.6" height="4.5"/><rect x="603.2" y="405" width="2.6" height="7"/><rect x="611.2" y="355" width="2.6" height="6.5"/>
</g>
<g fill="#b01010" font-size="3" text-anchor="middle">
<text x="423" y="273">3300</text><text x="466.5" y="273">4800</text><text x="501.5" y="273">240</text><text x="518" y="273">2100</text><text x="535.5" y="273">240</text><text x="562" y="273">3600</text><text x="498" y="265">13800</text>
<text x="447" y="462.5">5700</text><text x="493" y="462.5">1200</text><text x="507.5" y="462.5">900</text><text x="538" y="462.5">3600</text><text x="576" y="462.5">2100</text><text x="500" y="475">13800</text>
</g>


<g stroke="#fff" stroke-width="1.1">

<path d="M432.3 304 V288.5 H504.2"/>
<path d="M436.3 341.5 V292.3 H499.5"/>
<path d="M432.3 329.5 V355 M432.3 375 V389.5 H503.5"/>
<path d="M436.3 341.5 H503.8 M436.3 344.6 H503.5 M436.3 344.6 V386"/>
<path d="M467 345.6 H500" stroke-width="0.9"/>

<path d="M514.6 288.7 H527 M527 289.4 H539 V308.5"/>
<path d="M503.6 292 V323.5 M503.6 341.5 V389.5"/>
<path d="M534.6 292.3 V391.5 M503.6 322 H520.8 M503.6 324.2 H520.8"/>

<path d="M539 308.5 H590.8 V324.2 M539 312.5 H586.6 V318.5"/>
<path d="M539 308.5 V391.5"/>
<path d="M586.6 349.5 H590.8 V370.2 H586.6 Z"/>
<path d="M539 364.3 H586.6"/>

<path d="M590.8 383 V391.5 H566.5 V428.5 H490 M586.6 383 V389 H562.3 V402.3 M562.3 417 V424.3 H529.7 M518.5 424.3 H517.7 M502.3 424.3 H485.4 V445.2 H406.7 M502.3 428.5 H490 V443 H406.7" />
<path d="M586.6 383 H590.8"/>
<path d="M535 391.5 H539.5 M562.3 389 H539"/>
<path d="M460 385.6 H467" stroke-width="1.6"/>
</g>
<rect x="502.3" y="424.3" width="15.4" height="4.2" fill="#fff"/>
<rect x="504.5" y="425.3" width="2.6" height="1.6" fill="#222"/><rect x="511.5" y="425.3" width="3.6" height="1.6" fill="#444"/>

<g stroke="#0aa0a8" stroke-width="1.1">

<rect x="432.6" y="304" width="3.6" height="25.5" fill="#0a8e96" stroke-width="0.6"/>
<path d="M432.3 304 H436.3 M432.3 329.5 H436.3"/>
<path d="M439.5 292.3 V341.5"/>
<path d="M444.2 292.3 V299 H453 M480.8 299 H489.7 V292.3"/>
<path d="M453 292.3 V321.5 Q453 323.8 455.3 323.8 H478.5 Q480.8 323.8 480.8 321.5 V292.3"/>

<rect x="504.4" y="288.5" width="10.2" height="3.8" fill="#0aa0a8"/>
<rect x="520.8" y="292.3" width="13.8" height="9.2"/>
<path d="M503.6 307 H515.4 L521 301.5 M516.5 306 L518 307.5 M518 304.5 L519.5 306 M519.5 303 L521 304.5"/>
<path d="M502.3 311.5 V319.2 M504.5 313 H514.6 V317.8 H504.5 M506.8 311.5 V319.2"/>

<path d="M543 312.5 V318.5 H551.2 M579.2 318.5 H586.6"/>
<path d="M551.2 312.5 V341.2 Q551.2 343.5 553.5 343.5 H577 Q579.2 343.5 579.2 341.2 V312.5"/>
<path d="M583.5 318.5 V351"/>
<path d="M587.6 324.2 V349.5 M589.8 324.2 V349.5" stroke-width="1.5"/>
<path d="M586.6 324.2 H590.8"/>
<path d="M539 351 H583.5 M539 361.6 H583.8"/>

<path d="M517.4 335 H528.5 V357 M522.3 342.3 V391.5 M522.3 342.3 H535"/>
<path d="M522.3 345.1 H535 M522.3 347.9 H535 M522.3 350.7 H535 M522.3 353.5 H535 M522.3 356.3 H535 M522.3 359.1 H535 M522.3 361.9 H535 M522.3 364.7 H535 M522.3 367.5 H535 M522.3 370.3 H535 M522.3 373.1 H535 M522.3 375.9 H535 M522.3 378.7 H535 M522.3 381.5 H535 M522.3 384.3 H535 M522.3 387.1 H535 M522.3 389.9 H535 M522.3 391.5 H535" stroke-width="0.9"/>
<path d="M527.3 355.5 L528.5 357.5 L529.7 355.5"/>

<rect x="557.4" y="366.5" width="11.8" height="7" fill="#2a8a90"/>
<path d="M538.5 374.2 H577.7 V388.5"/>
<rect x="539.2" y="374.2" width="9.3" height="13.8"/>
<path d="M540.5 375.5 L548.5 387 M543.5 380 L545 382.5"/>
<path d="M539 389.6 H562" stroke-width="1.6"/>
<path d="M578.5 372.3 H585.4 V383.8 H578.5 Z"/>
<path d="M587.6 370.5 V382.5 M589.8 370.5 V382.5" stroke-width="1.3"/>
<path d="M563.4 402.3 V417 M565.4 402.3 V417 M562.3 402.3 H566.5 M562.3 417 H566.5"/>
<path d="M518.5 424.3 H529.7 V428.5 H518.5 Z M520.5 425 L527.5 427.8 M527.5 425 L520.5 427.8" stroke-width="0.9"/>

<path d="M539.2 406 V424.3 M549.2 406 V424.3 M539.2 414.8 H549.2"/>

<rect x="432.6" y="355" width="3.6" height="20" fill="#0a8e96" stroke-width="0.6"/>
<path d="M432.3 355 H436.3 M432.3 375 H436.3"/>
<path d="M447.2 344.6 V376 M459.7 344.6 V376 M436.3 360 H459.7 M436.3 376 H479.5 V386 M448.5 386.2 H503.5"/>
<path d="M497.7 359.2 H503.5 M497.7 359.2 V385.8"/>

<path d="M406.6 445 V385.4 H432.3"/>
<path d="M410.3 443 V389 H432.3" stroke-width="2"/>
<path d="M409 389 H432.3" stroke-width="2.6"/>
<path d="M412.2 443 V415"/>
<path d="M433.4 402.3 V396.6 H480.5 V430.8"/>
<rect x="424.2" y="402.3" width="12.3" height="25.4"/>
<path d="M433.4 427.7 V431"/>
<rect x="450.3" y="408" width="14.3" height="14.8"/>
<rect x="429.2" y="431" width="9.3" height="9.6"/><rect x="475.4" y="431" width="9.2" height="9.6"/>
<path d="M438.5 441 H475.4"/>
<path d="M478.4 418.4 L484.6 411.6 L489 415.4 L486 422.4 Z M484.6 411.6 Q490.4 413.6 489 420"/>
</g>


<g stroke="#7e7e7e" stroke-width="1">

<path d="M453 292.6 H480.8 M453 300 H480.8 M453.5 293 L466 300 L467 293 M467 293 L480.4 300 M453 300 Q455 304 457 302 M480.8 300 Q478.8 304 476.8 302"/>
<path d="M458 300 Q466.9 296 476 300" />

<rect x="490.8" y="292.6" width="9.2" height="17.7"/><rect x="490.8" y="310.3" width="9.2" height="16.7"/>
<path d="M490.8 292.6 L500 310.3 M500 292.6 L490.8 310.3 M490.8 310.3 L500 327 M500 310.3 L490.8 327"/>
<rect x="447" y="339" width="30" height="1.6" fill="#7e7e7e" stroke="none"/>
<path d="M487.5 330 Q488 339 498.5 340.8"/>
<path d="M500 329 V341"/>

<rect x="524.5" y="294" width="7.8" height="6"/>
<path d="M526.5 294 V296 H530.5 V294"/>
<path d="M505 297.5 Q507.5 296.5 506.5 299 Q505.5 301 507.5 301.5"/>
<path d="M521.5 322 Q522 312 532.3 310.8"/>

<path d="M551.2 312.8 H579.2 M551.5 313 L564 319 L565 313 M565 313 L578.8 319 M551.2 319.5 Q553.2 323.5 555.2 321.5 M579.2 319.5 Q577.2 323.5 575.2 321.5"/>
<path d="M556 319.5 Q565.2 315.5 574.5 319.5"/>
<path d="M550.8 331 Q550 341 540 343"/>

<rect x="538.8" y="352.3" width="45" height="8.5" stroke-width="1.3"/>
<path d="M550 352.3 V360.8 M561.3 352.3 V360.8 M572.6 352.3 V360.8 M539 352.5 L550 360.6 M550 352.5 L539 360.6 M550 352.5 L561.3 360.6 M561.3 352.5 L550 360.6 M561.3 352.5 L572.6 360.6 M572.6 352.5 L561.3 360.6 M572.6 352.5 L583.8 360.6 M583.8 352.5 L572.6 360.6"/>

<rect x="559" y="367.6" width="4" height="4.2" fill="#6a6a6a"/><rect x="564.4" y="367.6" width="3.4" height="4.2" fill="#6a6a6a"/>
<rect x="579.6" y="373.6" width="4.6" height="8.8"/>

<rect x="532.8" y="407" width="5.4" height="6.5"/><rect x="532.8" y="416.4" width="5.4" height="6.8"/>
<rect x="550.4" y="407" width="6.6" height="6.5"/><rect x="550.4" y="416.4" width="6.6" height="6.8"/>
<path d="M557.7 406.5 V413.5 M557.7 416.5 V423"/>
<rect x="539.6" y="407.2" width="9.2" height="6.3" fill="#4a4a4a" stroke="none"/><rect x="539.6" y="416.2" width="9.2" height="6.8" fill="#4a4a4a" stroke="none"/>

<rect x="436.8" y="377.4" width="22.2" height="8"/>
<path d="M447.9 377.4 V385.4 M438 378.4 L447 384.6 M447 378.4 L438 384.6 M449 378.4 L458 384.6 M458 378.4 L449 384.6"/>
<circle cx="468.2" cy="375" r="3"/>
<path d="M488 348 Q488.5 357 497.7 359.2 M500 347 V359.2"/>
<rect x="480.2" y="380.4" width="16.8" height="5"/>
<path d="M481.5 383 Q484 380.5 486.5 383 Q489 385 491.5 382.5 Q494 381 496 383.5"/>
<rect x="498.6" y="360" width="4.2" height="25.4"/>
<path d="M499 361 L502.4 372 L499 384 M502.4 361 L499 372 L502.4 384"/>

<rect x="440" y="391.2" width="37" height="1.8" fill="#7e7e7e" stroke="none"/>
<path d="M427.7 415 V424.3 H436.5" stroke-width="1.2"/>
<rect x="440" y="428.2" width="33.6" height="12.4" rx="1.5"/>
<path d="M442.4 428.2 V438 H471.2 V428.2 M452 428.2 V438 M461.6 428.2 V438"/>
<circle cx="433.8" cy="435.8" r="1.6" fill="#7e7e7e"/><circle cx="480" cy="435.8" r="1.6" fill="#7e7e7e"/>
<path d="M433.8 432.6 V439 M430.6 435.8 H437 M476.8 435.8 H483.2 M480 432.6 V439"/>
<circle cx="448.5" cy="295.7" r="1.7" fill="#7e7e7e"/><circle cx="484.6" cy="295.7" r="1.7" fill="#7e7e7e"/>
<circle cx="547.3" cy="315.4" r="1.7" fill="#7e7e7e"/><circle cx="583" cy="315.4" r="1.7" fill="#7e7e7e"/>
</g>

<g stroke="#1b96e6" stroke-width="1.8">
<path d="M487.2 328.8 H503.8 M499 341.2 H504 M487.7 347 H503.5"/>
<path d="M532.8 310.3 V323.8 M520.6 322 V325"/>
<path d="M534.6 330.3 H550.8 M534.6 343 H539"/>
</g>

<g fill="#f5c400" font-weight="bold" text-anchor="middle">
<text x="464.6" y="310.4" font-size="3">主卧室</text><text x="466.4" y="314.7" font-size="2.9">Master bedroom</text>
<rect x="511.2" y="297" width="2.6" height="5.6"/>
<text x="564.4" y="334" font-size="3.6">次卧室</text>
<text x="474.2" y="363.2" font-size="3.4">书房</text>
<text x="561.3" y="380.4" font-size="4.4">厨房</text><rect x="556" y="381.4" width="10.6" height="1.4"/>
<text x="457.5" y="413.4" font-size="3.6">客厅</text><text x="457.5" y="418.2" font-size="2.8">Living room</text>
</g>
<g stroke-width="0.7">
<path d="M555.4 335.6 H574.3" stroke="#a08020" stroke-dasharray="3 1"/>
<path d="M465 365.6 H484.6" stroke="#a08020" stroke-dasharray="3 1"/>
</g>


<rect x="851.8" y="184" width="9.6" height="3.2" fill="#000" stroke="#f0f0f0" stroke-width="1.5"/>
<rect x="870.8" y="177.6" width="7.4" height="6.6" fill="#000" stroke="#e8e8e8" stroke-width="1"/>
<rect x="867.8" y="180.8" width="7.4" height="6.6" fill="#000" stroke="#e8e8e8" stroke-width="1"/>
<rect x="868.6" y="181.4" width="5.8" height="1.4" fill="#e8e8e8"/>
<path d="M884 180 L893.2 187.6 M893.2 180 L884 187.6" stroke="#e8e8e8" stroke-width="3.4"/>
<path d="M884.6 180.6 L892.6 187 M892.6 180.6 L884.6 187" stroke="#000" stroke-width="0.45"/>

<circle cx="867" cy="216" r="22.4" fill="#4a7ed6" stroke="#fff" stroke-width="3"/>
<rect x="856" y="208" width="12.6" height="12" rx="0.8" fill="#fff"/>
<text x="862.2" y="217.6" text-anchor="middle" font-size="8.5" font-weight="bold" fill="#4a7ed6">A</text>
<rect x="864.6" y="214.6" width="13.6" height="12.6" rx="0.8" fill="#fff" stroke="#4a7ed6" stroke-width="0.9"/>
<text x="871.4" y="225.2" text-anchor="middle" font-size="9.5" font-weight="bold" fill="#4a7ed6">A</text>
<path d="M869.4 207 Q874 206.4 874.2 210.6" stroke="#fff" stroke-width="1.8"/>
<path d="M871.2 209.8 H877.2 L874.2 213.4 Z" fill="#fff"/>

</svg>

</div>
<div id="vsb" class="abs"></div>
<div id="modelbar" class="abs">
<svg class="abs" style="left:0;top:0" width="663" height="21" viewBox="255 504 663 21" font-family="'Liberation Sans','DejaVu Sans',sans-serif">
<path d="M260.2 504 L267.6 522 H307.8 L315 504" fill="#cfe0f4" stroke="#9aa9bb" stroke-width="1"/>
<text x="271" y="516.2" font-size="11.5" fill="#1a2858" textLength="31.5" lengthAdjust="spacingAndGlyphs">Model</text>
<defs><linearGradient id="gmb" x1="0" y1="0" x2="1" y2="0"><stop offset="0" stop-color="#c9dcf2" stop-opacity="0"/><stop offset="1" stop-color="#e8f0fa"/></linearGradient>
<linearGradient id="gmr" x1="0" y1="0" x2="0" y2="1"><stop offset="0" stop-color="#eaf1fb"/><stop offset="1" stop-color="#b3cbeb"/></linearGradient>
<linearGradient id="ghb" x1="0" y1="0" x2="0" y2="1"><stop offset="0" stop-color="#e6eefa"/><stop offset="1" stop-color="#c8daf1"/></linearGradient></defs>
<rect x="330" y="504" width="354" height="21" fill="url(#gmb)"/>
<rect x="659.5" y="507.5" width="17" height="17" rx="3" fill="url(#ghb)" stroke="#8fa8cc" stroke-width="1"/>
<path d="M663.6 513.6 L665 512.3 L668 515.2 L671 512.3 L672.4 513.6 L668 518.6 Z" fill="#fff" stroke="#a08838" stroke-width="0.9"/>
<path d="M682 505 V525" stroke="#5c6c8c" stroke-width="1.3" stroke-dasharray="1.3 1.7"/>
<rect x="684" y="504" width="217.2" height="17.5" fill="#f0f0f0"/>
<rect x="684" y="521.5" width="217.2" height="3.5" fill="#cfe0f5"/>
<rect x="901.2" y="504" width="16.8" height="21" fill="url(#gmr)"/>
<path d="M695.6 509.4 L692 512.8 L695.6 516.2" fill="none" stroke="#4a4a4a" stroke-width="2"/>
<path d="M890.8 509.4 L894.4 512.8 L890.8 516.2" fill="none" stroke="#4a4a4a" stroke-width="2"/>
<rect x="758" y="505" width="17" height="15.5" fill="#cdcdcd"/>

</svg>

</div>
<div class="abs" style="left:255px;top:525px;width:663px;height:5px;background:#f0f0f0"></div>
<div id="cmdhead" class="abs">命令行<svg class="abs" style="left:900.5px;top:3.5px" width="9" height="10" viewBox="0 0 9 10"><path d="M2.2 0.6 H6.8 V4.6 H2.2 Z M0.6 5.2 H8.4 M4.5 5.2 V9.6" fill="none" stroke="#fff" stroke-width="1.3"/><rect x="5" y="1" width="1.6" height="3.6" fill="#fff"/></svg>
</div>
<div id="cmdarea" class="abs">
<div class="abs" style="left:58px;top:5.5px;width:150px;height:55px;border:1px solid #828790;border-bottom:none;background:#fff;font-size:12px;line-height:15px;padding:1.5px 0 0 3.5px;color:#000">Line<br>Linetypes<br>Lineweight</div>
<div class="abs" style="left:898.5px;top:2px;width:17.5px;height:57.5px;background:#f0f0f0"></div>
<svg class="abs" style="left:898.5px;top:2px" width="18" height="58" viewBox="0 0 18 58"><path d="M5 11 L8.8 7.2 L12.6 11" fill="none" stroke="#bfbfbf" stroke-width="1.6"/><path d="M5 47 L8.8 50.8 L12.6 47" fill="none" stroke="#bfbfbf" stroke-width="1.6"/></svg>

</div>
<div id="cmdin" class="abs">
<div class="abs" style="left:9.5px;top:3px;font-size:12.5px;line-height:17px;white-space:nowrap;color:#000">命令行:</div>
<div class="abs" style="left:57.5px;top:0;width:858.5px;height:23px;background:#fff;border:1.3px solid #2b78d4;border-right-width:2px;font-size:12px;line-height:20px;padding-left:5.5px">Line</div>

</div>
<div id="status" class="abs">
<div class="st" style="left:9px;transform:scaleX(.96)">新块(1).dwg</div>
<div class="sd" style="left:179px"></div>
<div class="st" style="left:185.5px;transform:scaleX(.92)">9/10</div>
<div class="sd" style="left:277px"></div>
<div class="st" style="left:365px;transform:scaleX(.907)">(1027313; 403264.5; 1.427747E-13)</div>
<div class="sd" style="left:609px"></div>
<div class="sd" style="left:730px"></div>
<div class="st" style="left:737px;transform:scaleX(.88)">15079.33 x 13749.38 x 1.33166E-6</div>
<svg class="abs" style="left:278px;top:0" width="86" height="19" viewBox="280 628.5 86 19">

<path d="M286 641 V635 A3.6 3.6 0 0 1 293.2 635 V638" fill="none" stroke="#c86a5a" stroke-width="1.8"/>
<path d="M291.6 632 A3.6 3.6 0 0 1 293.2 635 V638" fill="none" stroke="#5a7ad0" stroke-width="1.8"/>
<path d="M284 641.6 L286.6 644.4 L292.6 637.4" fill="none" stroke="#18a030" stroke-width="1.8"/>
<rect x="293.4" y="641.8" width="2" height="2" fill="#e02020"/>

<g fill="#222"><rect x="303.2" y="631" width="1.6" height="1.6"/><rect x="309.2" y="631" width="1.6" height="1.6"/><rect x="315.2" y="631" width="1.6" height="1.6"/>
<rect x="303.2" y="636.5" width="1.6" height="1.6"/><rect x="309.2" y="636.5" width="1.6" height="1.6"/><rect x="315.2" y="636.5" width="1.6" height="1.6"/>
<rect x="303.2" y="642" width="1.6" height="1.6"/><rect x="309.2" y="642" width="1.6" height="1.6"/><rect x="315.2" y="642" width="1.6" height="1.6"/></g>

<path d="M330.2 631 V641.6" stroke="#2a50c0" stroke-width="1.2"/><path d="M325.6 642.2 H337" stroke="#d8c49a" stroke-width="1.2"/>

<circle cx="350" cy="637.6" r="4.6" fill="#fff" stroke="#2a66d8" stroke-width="1.2"/>
<path d="M349 638.6 L357.6 629.4 M352 637.6 H358.6" stroke="#111" stroke-width="1.1"/>
<path d="M344 640.6 L347 644 L353.4 636.8" fill="none" stroke="#18a030" stroke-width="1.8"/>
</svg>
<div class="sd" style="left:320px;opacity:.6"></div><div class="sd" style="left:338px;opacity:.6"></div><div class="sd" style="left:296px;opacity:.6"></div>


</div>
<svg class="abs" style="left:901px;top:175px" width="17" height="329" viewBox="901 175 17 329">
<rect x="901" y="175" width="1" height="329" fill="#fff"/>
<path d="M906.1 186.3 L909.6 182.8 L913.1 186.3" fill="none" stroke="#4a4a4a" stroke-width="2"/>
<path d="M906.1 493.6 L909.6 497.1 L913.1 493.6" fill="none" stroke="#4a4a4a" stroke-width="2"/>
<rect x="902.2" y="295" width="14.8" height="16.8" fill="#cdcdcd"/>
</svg>
<div class="abs" style="left:8.2px;top:498.2px;width:366.2px;height:144.2px;border:3px solid #f9373a"></div>
<div class="abs" style="left:0;top:34px;width:2px;height:616px;background:linear-gradient(90deg,#3a3a3a 45%,#050505 45%)"></div>
<div class="abs" style="left:918px;top:34px;width:2px;height:616px;background:#2a2a2a"></div>
<div class="abs" style="left:0;top:647.5px;width:920px;height:2.5px;background:#333"></div>

</body></html>
